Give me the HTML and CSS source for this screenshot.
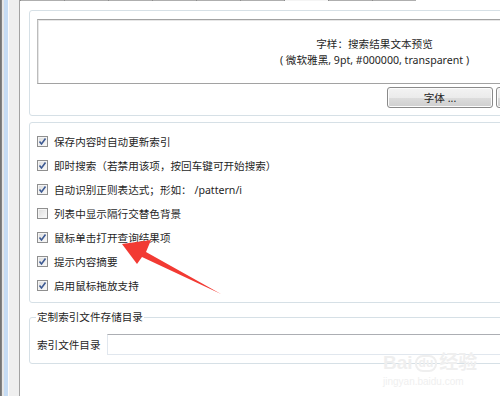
FILE: index.html
```html
<!DOCTYPE html>
<html lang="zh-CN">
<head>
  <meta charset="UTF-8" />
  <title>选项 - 搜索</title>
  <link rel="stylesheet" href="styles.css">
</head>
<body>
  <div class="window">
    <div class="rail"></div>
    <div class="panel">
      <div class="tabs">
        <span class="tab"></span>
        <span class="tab"></span>
        <span class="tab"></span>
        <span class="tab"></span>
        <span class="tab"></span>
        <span class="tab"></span>
        <span class="tab active"></span>
        <span class="tab"></span>
        <span class="tab"></span>
      </div>

      <div class="content">
        <div class="group font-group">
          <div class="preview">
            <p>字样：搜索结果文本预览</p>
            <p>( 微软雅黑, 9pt, #000000, transparent )</p>
          </div>
          <div class="buttons">
            <button class="btn">字体 ...</button>
            <button class="btn"></button>
          </div>
        </div>

        <div class="group options">
          <label class="option"><span class="box checked"></span>保存内容时自动更新索引</label>
          <label class="option"><span class="box checked"></span>即时搜索（若禁用该项，按回车键可开始搜索）</label>
          <label class="option"><span class="box checked"></span>自动识别正则表达式；形如： /pattern/i</label>
          <label class="option"><span class="box"></span>列表中显示隔行交替色背景</label>
          <label class="option"><span class="box checked"></span>鼠标单击打开查询结果项</label>
          <label class="option"><span class="box checked"></span>提示内容摘要</label>
          <label class="option"><span class="box checked"></span>启用鼠标拖放支持</label>
        </div>

        <fieldset class="group dir-group">
          <legend>定制索引文件存储目录</legend>
          <div class="field">
            <span class="field-label">索引文件目录</span>
            <span class="input"></span>
          </div>
        </fieldset>
      </div>
    </div>

    <!-- annotation arrow drawn over the dialog -->
    <svg class="arrow" width="500" height="396" viewBox="0 0 500 396">
      <polygon points="122,244 151,240 146,252 221,294 142,257 137,264" fill="#f23a33"/>
    </svg>

    <div class="watermark">
      <div class="wm-logo"><span>Bai</span><span class="wm-du">du</span><span>经验</span></div>
      <div class="wm-url">jingyan.baidu.com</div>
    </div>
  </div>

  <script>
    const tick = '<svg width="9" height="9" viewBox="0 0 9 9"><polyline points="1.5,4.5 3.5,7 7.5,1.5" fill="none" stroke="#3d5a93" stroke-width="1.6"/></svg>';
    document.querySelectorAll('.box.checked').forEach(box => {
      box.innerHTML = tick;
    });
  </script>
</body>
</html>
```

FILE: styles.css
```css
body {
  margin: 0;
  width: 500px;
  height: 396px;
  overflow: hidden;
  background: #fff;
  color: #1f1f1f;
  font-family: "Noto Sans", "Noto Sans CJK SC", sans-serif;
  font-size: 10.6px;
}
.window {
  position: relative;
  display: flex;
  height: 396px;
}
.rail {
  width: 19px;
  flex: none;
  background: linear-gradient(to right,
    #6e6e6e 0, #8a8a8a 2px, #e6e6e6 2px, #e6e6e6 4px,
    #c6dcf4 4px, #c6dcf4 8px, #fbfbfb 8px, #fbfbfb 9px,
    #efefef 9px, #efefef 19px);
}
.panel {
  flex: 1;
  min-width: 0;
  overflow: hidden;
  border-left: 1px solid #a3a3a3;
}
.tabs {
  display: flex;
  height: 1px;
}
.tab {
  width: 43px;
  flex: none;
  background: #aeaeae;
  border-left: 1px solid #8c8c8c;
}
.tab.active {
  background: #f4f4f4;
}
.content {
  padding: 9px 0 0 9px;
}
.group {
  width: 700px;
  border: 1px solid #d6e0e6;
  border-radius: 3px;
  box-sizing: border-box;
}
.font-group {
  padding: 8px 7px 7px;
}
.preview {
  height: 65px;
  width: 675px;
  box-sizing: border-box;
  border: 1px solid #a2a2a2;
  border-left-color: #bcbcbc;
  box-shadow: inset 1px 1px 0 #e6e6e6;
  display: flex;
  flex-direction: column;
  justify-content: center;
  align-items: center;
}
.preview p {
  margin: 0;
  line-height: 16px;
}
.buttons {
  display: flex;
  gap: 3px;
  margin: 3px 0 0 350px;
}
.btn {
  width: 106px;
  height: 21px;
  padding: 0;
  border: 1px solid #8a8a8a;
  border-radius: 3px;
  background: linear-gradient(#f3f3f3 0, #ebebeb 50%, #dddddd 51%, #cfcfcf 100%);
  box-shadow: inset 0 0 0 1px #fcfcfc;
  font: inherit;
  color: #222;
}
.options {
  margin-top: 6px;
  padding: 6px 7px 5px;
}
.option {
  display: flex;
  align-items: center;
  gap: 6px;
  height: 24px;
  white-space: nowrap;
}
.box {
  width: 11px;
  height: 11px;
  flex: none;
  box-sizing: border-box;
  border: 1px solid #8f8f8f;
  background: linear-gradient(135deg, #dcdcdc, #fbfbfb);
  box-shadow: inset 0 0 0 1px #f4f4f4;
  display: flex;
  align-items: center;
  justify-content: center;
}
.dir-group {
  margin: 6px 0 0;
  padding: 0 7px 8px;
  min-width: 0;
}
.dir-group legend {
  padding: 0 1px;
  margin-left: -1px;
  line-height: 16px;
}
.field {
  display: flex;
  align-items: center;
  gap: 6px;
  margin-top: 9px;
}
.input {
  width: 600px;
  height: 21px;
  box-sizing: border-box;
  border: 1px solid #e1e7ee;
  border-top-color: #acaeb3;
  background: #fff;
}
.arrow {
  position: absolute;
  left: 0;
  top: 0;
  pointer-events: none;
}
.watermark {
  position: absolute;
  left: 383px;
  top: 352px;
  color: #efefef;
  font-family: "Liberation Sans", "Noto Sans CJK SC", sans-serif;
}
.wm-logo {
  display: flex;
  align-items: center;
  gap: 2px;
  font-size: 19px;
  font-weight: bold;
  line-height: 22px;
}
.wm-du {
  font-size: 12px;
  border: 2px solid #efefef;
  border-radius: 8px;
  padding: 0 2px;
  line-height: 13px;
}
.wm-url {
  font-size: 10px;
  margin-top: 2px;
}
```
